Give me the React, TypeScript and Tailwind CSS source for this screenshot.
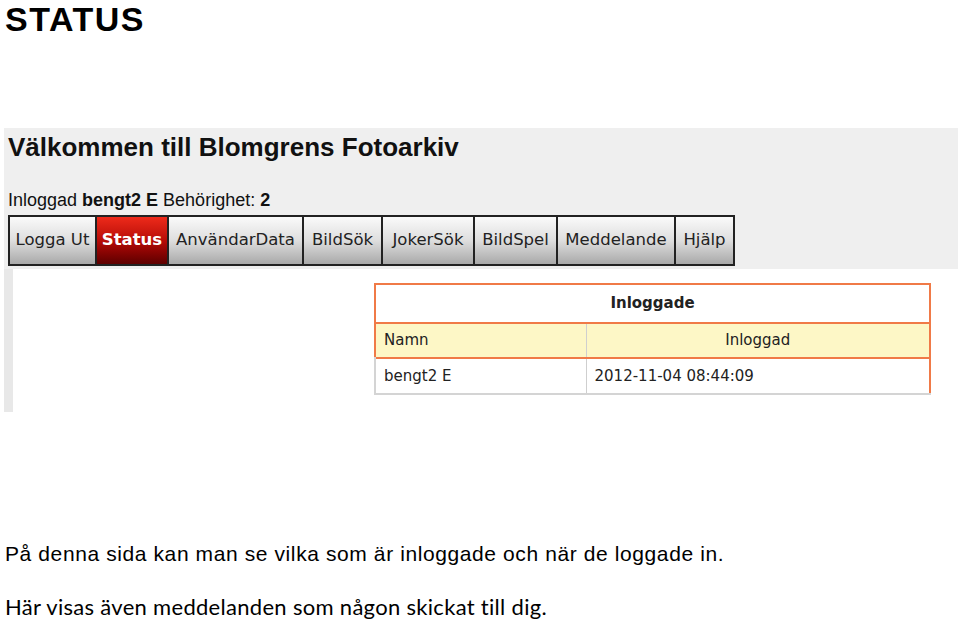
import React from 'react';

const tabs = [
  { label: 'Logga Ut', w: 'w-[89px] border-l-2' },
  { label: 'Status', w: 'w-[72px]', active: true },
  { label: 'AnvändarData', w: 'w-[135px]' },
  { label: 'BildSök', w: 'w-[79px]' },
  { label: 'JokerSök', w: 'w-[92px]' },
  { label: 'BildSpel', w: 'w-[83px]' },
  { label: 'Meddelande', w: 'w-[118px]' },
  { label: 'Hjälp', w: 'w-[59px]' },
];

export default function App() {
  return (
    <div className="w-[960px] h-[623px] bg-white overflow-hidden flex flex-col font-['Liberation_Sans',Arial,sans-serif] text-black">
      <h1 className="pl-[5px] text-[34px] leading-[38px] font-bold tracking-[1.5px]">STATUS</h1>

      <div className="mt-[90px] ml-[4px] w-[954px] h-[284px] bg-[#efefef] flex flex-col">
        <div className="pl-[4px] pt-[4px] text-[26px] leading-[30px] font-bold text-[#111]">
          Välkommen till Blomgrens Fotoarkiv
        </div>
        <div className="pl-[4px] mt-[28px] text-[18px] leading-[20px] text-[#111]">
          Inloggad <span className="font-bold">bengt2 E</span> Behörighet: <span className="font-bold">2</span>
        </div>

        <div className="ml-[4px] mt-[5px] flex h-[51px] w-fit border-y-2 border-[#222] font-['DejaVu_Sans',Verdana,sans-serif] text-[16.5px]">
          {tabs.map((t) => (
            <div
              key={t.label}
              className={`${t.w} flex items-center justify-center border-r-2 border-[#222] ${
                t.active
                  ? 'bg-gradient-to-b from-[#ee2a1a] via-[#b80c08] to-[#5e0000] text-white font-bold'
                  : 'bg-gradient-to-b from-[#fafafa] via-[#dedede] to-[#a9a9a9] text-[#222]'
              }`}
            >
              {t.label}
            </div>
          ))}
        </div>

        <div className="mt-[3px] flex flex-1">
          <div className="w-[9px] bg-[#e8e8e8]" />
          <div className="flex-1 bg-white pt-[14px] pl-[361px] font-['DejaVu_Sans',Verdana,sans-serif] text-[15px] text-[#222]">
            <table className="w-[557px] border-collapse">
              <tbody>
                <tr className="h-[39px] border-2 border-[#f07a47]">
                  <th colSpan={2} className="text-center font-bold">Inloggade</th>
                </tr>
                <tr className="h-[35px] bg-[#fdf7c6] border-2 border-[#f07a47]">
                  <td className="w-[211px] pl-[8px] border-r border-[#cfcfcf]">Namn</td>
                  <td className="text-center">Inloggad</td>
                </tr>
                <tr className="h-[36px]">
                  <td className="pl-[8px] border-l-2 border-b-2 border-[#d4d4d4] border-r border-r-[#cfcfcf]">bengt2 E</td>
                  <td className="pl-[8px] border-r-2 border-r-[#f07a47] border-b-2 border-b-[#d4d4d4]">2012-11-04 08:44:09</td>
                </tr>
              </tbody>
            </table>
          </div>
        </div>
      </div>

      <p className="pl-[5px] mt-[130px] text-[21px] leading-[24px] tracking-[0.6px] font-['Liberation_Sans',Arial,sans-serif]">
        På denna sida kan man se vilka som är inloggade och när de loggade in.
      </p>
      <p className="pl-[5px] mt-[29px] text-[22px] leading-[24px] tracking-[0.3px] font-['Lato','Noto_Sans',sans-serif]">
        Här visas även meddelanden som någon skickat till dig.
      </p>
    </div>
  );
}
